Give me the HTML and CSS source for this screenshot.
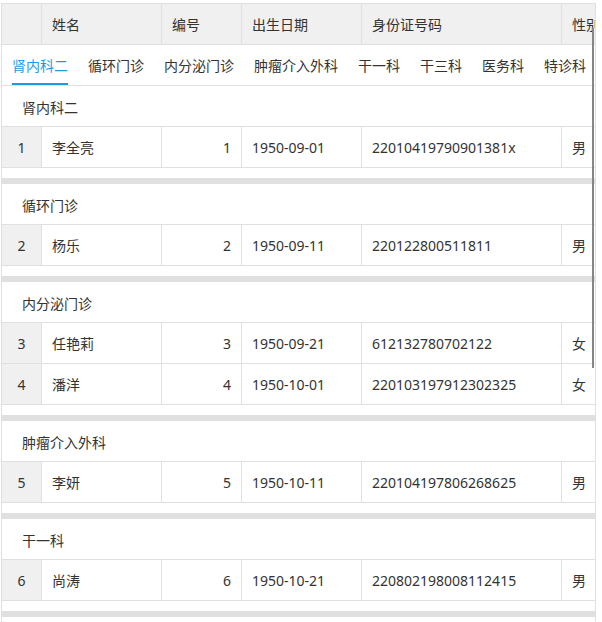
FILE: index.html
```html
<!DOCTYPE html>
<html>
<head>
  <meta charset="utf-8">
  <link rel="stylesheet" href="styles.css">
</head>
<body>
  <div class="grid">
    <div class="thumb"></div>

    <div class="row head">
      <div class="cell idx"></div>
      <div class="cell">姓名</div>
      <div class="cell">编号</div>
      <div class="cell">出生日期</div>
      <div class="cell">身份证号码</div>
      <div class="cell">性别</div>
    </div>

    <div class="tabs">
      <span class="tab active">肾内科二</span>
      <span class="tab">循环门诊</span>
      <span class="tab">内分泌门诊</span>
      <span class="tab">肿瘤介入外科</span>
      <span class="tab">干一科</span>
      <span class="tab">干三科</span>
      <span class="tab">医务科</span>
      <span class="tab">特诊科</span>
    </div>

    <div class="group">
      <div class="group-title">肾内科二</div>
      <div class="row">
        <div class="cell idx">1</div>
        <div class="cell">李全亮</div>
        <div class="cell num">1</div>
        <div class="cell">1950-09-01</div>
        <div class="cell">22010419790901381x</div>
        <div class="cell">男</div>
      </div>
    </div>

    <div class="group">
      <div class="group-title">循环门诊</div>
      <div class="row">
        <div class="cell idx">2</div>
        <div class="cell">杨乐</div>
        <div class="cell num">2</div>
        <div class="cell">1950-09-11</div>
        <div class="cell">220122800511811</div>
        <div class="cell">男</div>
      </div>
    </div>

    <div class="group">
      <div class="group-title">内分泌门诊</div>
      <div class="row">
        <div class="cell idx">3</div>
        <div class="cell">任艳莉</div>
        <div class="cell num">3</div>
        <div class="cell">1950-09-21</div>
        <div class="cell">612132780702122</div>
        <div class="cell">女</div>
      </div>
      <div class="row">
        <div class="cell idx">4</div>
        <div class="cell">潘洋</div>
        <div class="cell num">4</div>
        <div class="cell">1950-10-01</div>
        <div class="cell">220103197912302325</div>
        <div class="cell">女</div>
      </div>
    </div>

    <div class="group">
      <div class="group-title">肿瘤介入外科</div>
      <div class="row">
        <div class="cell idx">5</div>
        <div class="cell">李妍</div>
        <div class="cell num">5</div>
        <div class="cell">1950-10-11</div>
        <div class="cell">220104197806268625</div>
        <div class="cell">男</div>
      </div>
    </div>

    <div class="group">
      <div class="group-title">干一科</div>
      <div class="row">
        <div class="cell idx">6</div>
        <div class="cell">尚涛</div>
        <div class="cell num">6</div>
        <div class="cell">1950-10-21</div>
        <div class="cell">220802198008112415</div>
        <div class="cell">男</div>
      </div>
    </div>
  </div>
</body>
</html>
```

FILE: styles.css
```css
body {
  margin: 0;
  height: 622px;
  overflow: hidden;
  background-color: #fff;
  font-family: "Noto Sans", "Noto Sans CJK SC", sans-serif;
  font-size: 14px;
  color: #333;
}

.grid {
  position: relative;
  width: 593px;
  height: 619px;
  margin: 3px 0 0 1px;
  border-left: 1px solid #e0e0e0;
  border-right: 1px solid #e0e0e0;
  overflow: hidden;
}

/* fake scrollbar thumb */
.thumb {
  position: absolute;
  top: 25px;
  left: 590px;
  width: 2px;
  height: 340px;
  background-color: #868686;
  z-index: 2;
}

.row {
  display: grid;
  grid-template-columns: 40px 120px 80px 120px 200px 80px;
  width: 640px;
  height: 41px;
  box-sizing: border-box;
  border-bottom: 1px solid #e0e0e0;
}

.head {
  height: 42px;
  border-top: 1px solid #e0e0e0;
  background-color: #f0f0f0;
}

.cell {
  display: flex;
  align-items: center;
  padding: 0 10px;
  border-right: 1px solid #e0e0e0;
  white-space: nowrap;
  overflow: hidden;
}

.idx {
  justify-content: center;
  padding: 0;
  background-color: #f0f0f0;
}

.num {
  justify-content: flex-end;
}

.tabs {
  display: flex;
  height: 41px;
  box-sizing: border-box;
  border-bottom: 1px solid #e0e0e0;
  white-space: nowrap;
}

.tab {
  display: flex;
  align-items: center;
  height: 40px;
  margin: 0 10px;
  box-sizing: border-box;
  border-bottom: 2px solid transparent;
  padding-top: 1px;
}

.tab.active {
  color: #1d9be0;
  border-bottom-color: #1d9be0;
}

.group {
  padding-bottom: 10px;
  border-bottom: 6px solid #e0e0e0;
}

.group-title {
  display: flex;
  align-items: center;
  height: 41px;
  box-sizing: border-box;
  padding-left: 20px;
  padding-top: 1px;
  border-bottom: 1px solid #e0e0e0;
}
```
